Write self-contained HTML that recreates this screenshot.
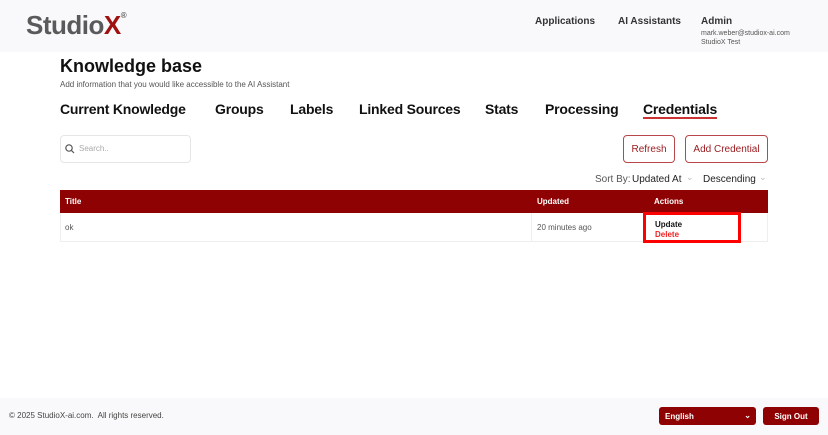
<!DOCTYPE html>
<html><head><style>
*{box-sizing:border-box;margin:0;padding:0}
body{width:828px;height:435px;position:relative;font-family:"Liberation Sans",sans-serif;background:#fff;overflow:hidden;color:#111}
.hdr{position:absolute;left:0;top:0;width:828px;height:52px;background:#f9f9fb}
.abs{position:absolute;white-space:nowrap}
.b{font-weight:bold}
.tab{position:absolute;top:101px;font-size:14px;font-weight:bold;letter-spacing:-0.2px}
.btn{position:absolute;top:135px;height:28px;border:1px solid #b8474b;border-radius:4px;color:#9a1a1e;font-size:10px;display:flex;align-items:center;justify-content:center}
.red{background:#8f0203;color:#fff}
</style></head><body>
<div class="hdr"></div>
<div class="abs b" style="left:26px;top:10px;font-size:26px;color:#5a5a5a;letter-spacing:-0.5px">Studio<span style="color:#a01010">X</span><sup style="font-size:8px;vertical-align:16px">®</sup></div>
<div class="abs b" style="left:535px;top:16px;font-size:10px;color:#333">Applications</div>
<div class="abs b" style="left:618px;top:16px;font-size:10px;color:#333">AI Assistants</div>
<div class="abs b" style="left:701px;top:16px;font-size:10px;color:#333">Admin</div>
<div class="abs" style="left:701px;top:29px;font-size:7px;color:#555;line-height:9px">mark.weber@studiox-ai.com<br>StudioX Test</div>
<div class="abs b" style="left:60px;top:56px;font-size:18px">Knowledge base</div>
<div class="abs" style="left:60px;top:80px;font-size:8px;color:#555">Add information that you would like accessible to the AI Assistant</div>
<div class="tab" style="left:60px">Current Knowledge</div>
<div class="tab" style="left:215px">Groups</div>
<div class="tab" style="left:290px">Labels</div>
<div class="tab" style="left:359px">Linked Sources</div>
<div class="tab" style="left:485px">Stats</div>
<div class="tab" style="left:545px">Processing</div>
<div class="tab" style="left:643px">Credentials</div>
<div class="abs" style="left:643px;top:117px;width:74px;height:2px;background:#c33"></div>
<div class="abs" style="left:60px;top:135px;width:131px;height:28px;border:1px solid #e6e6e6;border-radius:4px"></div>
<svg class="abs" style="left:65px;top:144px" width="10" height="10" viewBox="0 0 10 10"><circle cx="4" cy="4" r="3.2" fill="none" stroke="#555" stroke-width="1.2"/><path d="M6.3 6.3L9 9" stroke="#555" stroke-width="1.2"/></svg>
<div class="abs" style="left:79px;top:144px;font-size:8px;color:#aaa">Search..</div>
<div class="btn" style="left:623px;width:52px">Refresh</div>
<div class="btn" style="left:685px;width:83px">Add Credential</div>
<div class="abs" style="left:595px;top:174px;font-size:10px;color:#555">Sort By:</div>
<div class="abs" style="left:632px;top:174px;font-size:10px;color:#222">Updated At</div>
<div class="abs" style="left:686px;top:172px;font-size:9px;color:#bbb">⌄</div>
<div class="abs" style="left:703px;top:174px;font-size:10px;color:#222">Descending</div>
<div class="abs" style="left:759px;top:172px;font-size:9px;color:#bbb">⌄</div>
<div class="abs red" style="left:60px;top:190px;width:708px;height:23px"></div>
<div class="abs b" style="left:65px;top:197px;font-size:8px;color:#fff">Title</div>
<div class="abs b" style="left:537px;top:197px;font-size:8px;color:#fff">Updated</div>
<div class="abs b" style="left:654px;top:197px;font-size:8px;color:#fff">Actions</div>
<div class="abs" style="left:60px;top:213px;width:708px;height:29px;border:1px solid #eee;border-top:none"></div>
<div class="abs" style="left:531px;top:213px;width:1px;height:29px;background:#eee"></div>
<div class="abs" style="left:65px;top:223px;font-size:8px;color:#555">ok</div>
<div class="abs" style="left:537px;top:223px;font-size:8px;color:#555">20 minutes ago</div>
<div class="abs" style="left:643px;top:212px;width:98px;height:31px;border:3px solid #f00"></div>
<div class="abs b" style="left:655px;top:220px;font-size:8px">Update</div>
<div class="abs b" style="left:655px;top:230px;font-size:8px;color:#e22">Delete</div>
<div class="abs" style="left:0;top:398px;width:828px;height:37px;background:#f9f9fb"></div>
<div class="abs" style="left:9px;top:411px;font-size:8px;color:#444">© 2025 StudioX-ai.com.&nbsp; All rights reserved.</div>
<div class="abs red b" style="left:659px;top:407px;width:97px;height:18px;border-radius:3px;font-size:8px;padding:5px 0 0 6px">English<span style="position:absolute;right:5px;top:4px">⌄</span></div>
<div class="abs red b" style="left:763px;top:407px;width:56px;height:18px;border-radius:3px;font-size:8px;text-align:center;padding-top:5px">Sign Out</div>
</body></html>
